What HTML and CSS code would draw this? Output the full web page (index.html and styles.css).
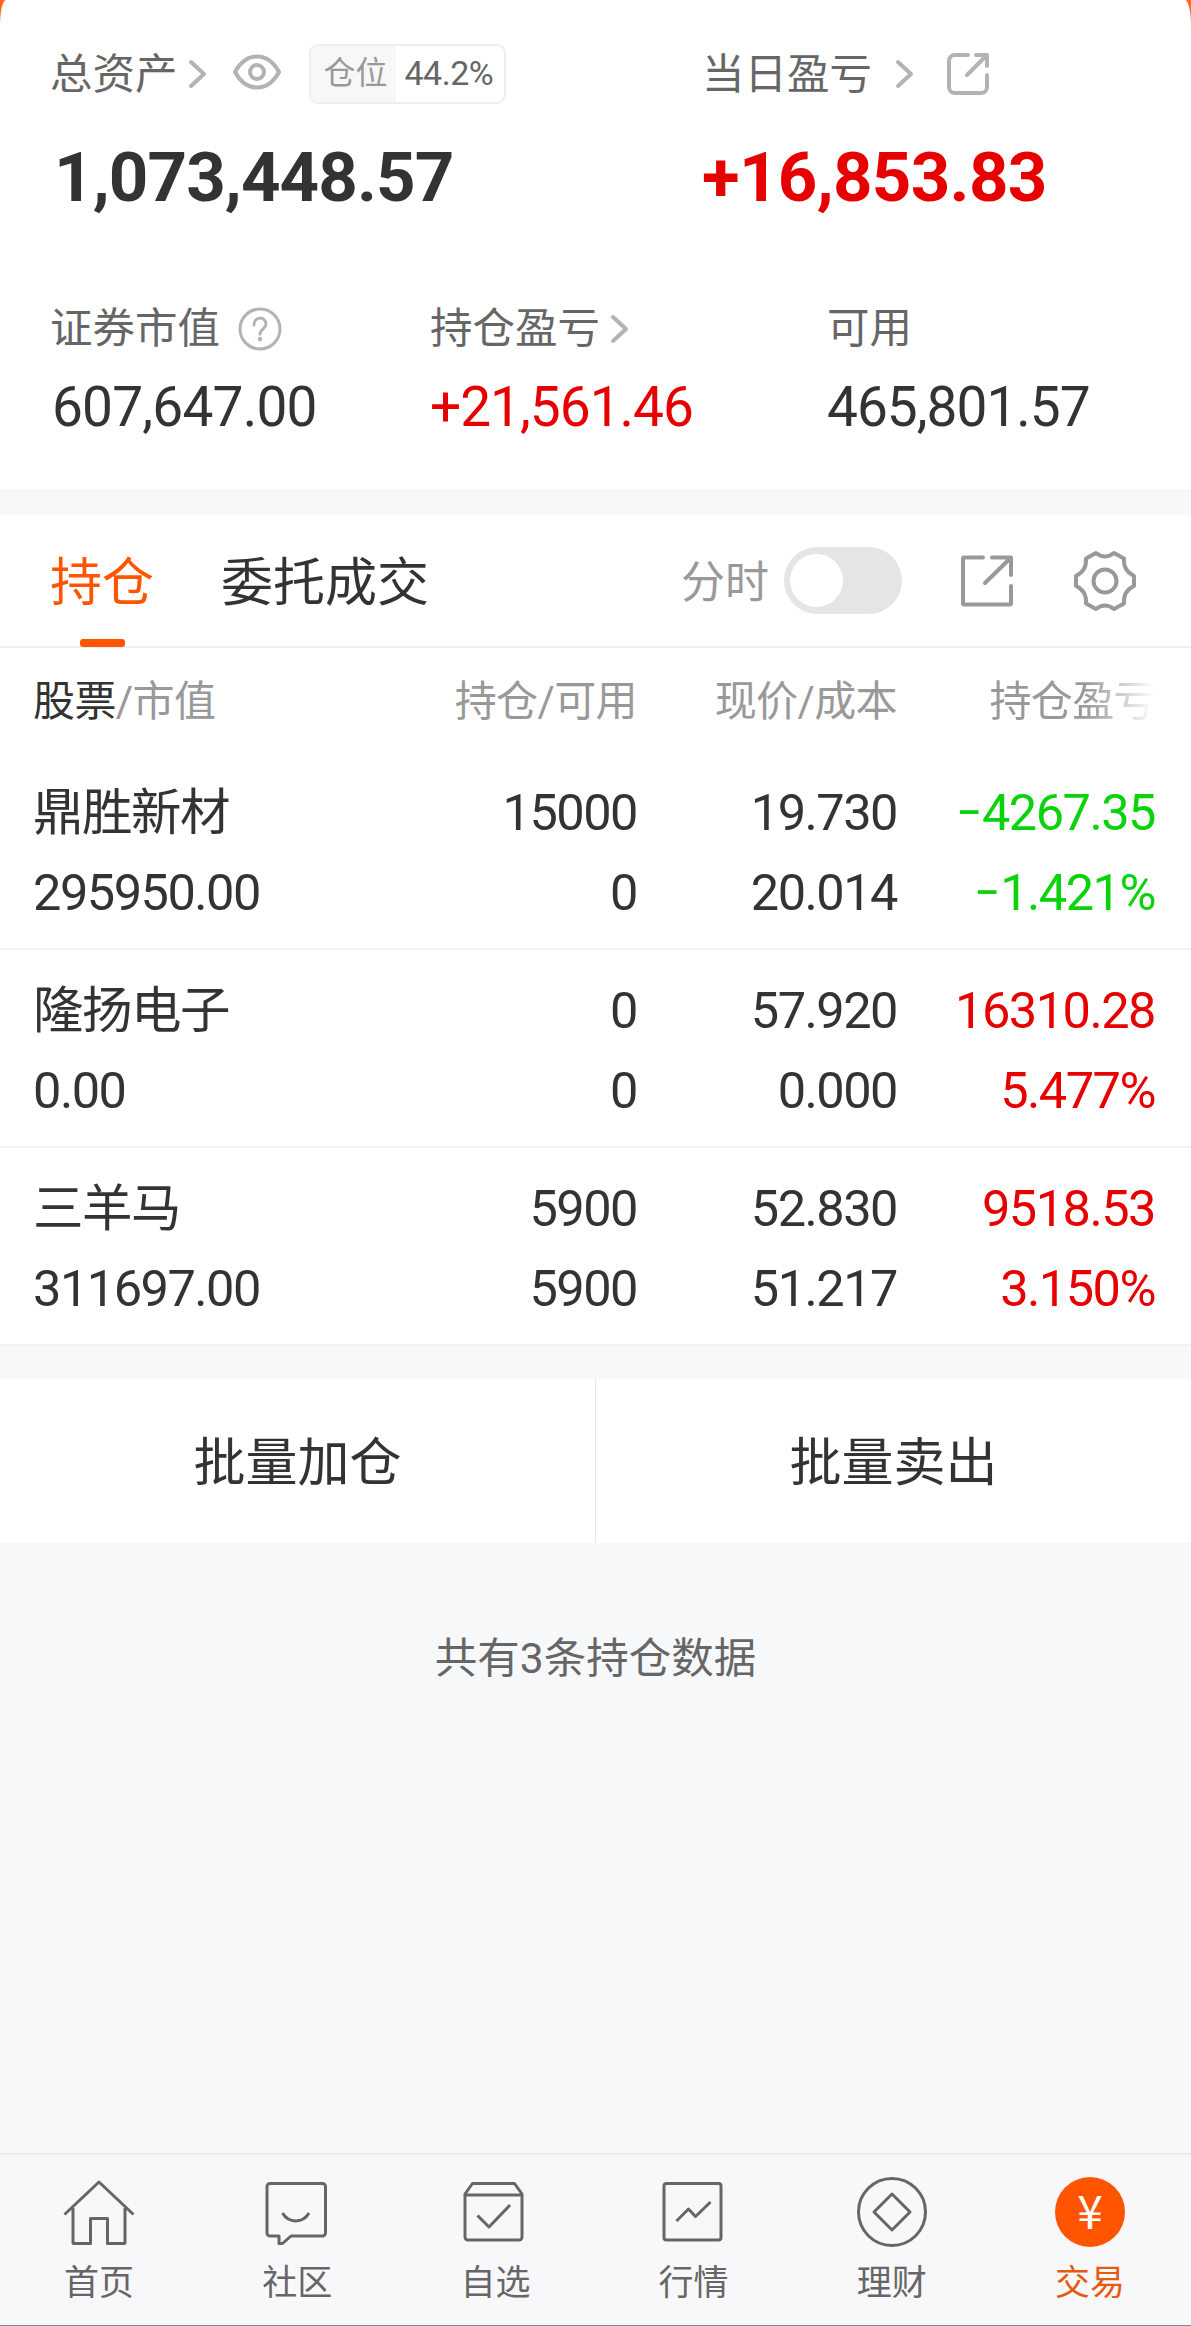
FILE: index.html
```
<!DOCTYPE html>
<html lang="zh-CN">
<head>
  <meta charset="UTF-8" />
  <meta name="viewport" content="width=device-width,initial-scale=1.0" />
  <title>持仓</title>
  <link rel="stylesheet" href="styles.css">
</head>
<body>
  <div class="top">
    <section class="summary">
      <div class="total">
        <div class="label">
          <span class="name">总资产</span>
          <svg class="chevron near" width="20" height="30" viewBox="0 0 20 30"><path d="M3 3l13 12L3 27" /></svg>
          <svg class="eye" width="52" height="40" viewBox="0 0 52 40"><path d="M4 20C10 9 17 4.500 26 4.500S42 9 48 20c-6 11-13 15.500-22 15.500S10 31 4 20z" /><circle cx="26" cy="20" r="7" /></svg>
          <span class="ratio"><span class="ratio-name">仓位</span><span class="ratio-value">44.2%</span></span>
        </div>
        <div class="big">1,073,448.57</div>
      </div>
      <div class="today">
        <div class="label">
          <span class="name">当日盈亏</span>
          <svg class="chevron far" width="20" height="30" viewBox="0 0 20 30"><path d="M3 3l13 12L3 27" /></svg>
          <svg class="share" width="44" height="44" viewBox="0 0 44 44"><path d="M22 3H9a6 6 0 0 0-6 6v26a6 6 0 0 0 6 6h26a6 6 0 0 0 6-6V23M30 3h11v11M40 4L21 23" /></svg>
        </div>
        <div class="big up">+16,853.83</div>
      </div>
    </section>

    <section class="details">
      <div class="detail">
        <div class="label">
          <span class="name">证券市值</span>
          <svg class="help" width="44" height="44" viewBox="0 0 44 44"><circle cx="22" cy="22" r="20" /><path d="M16 18c0-9 12-9 12-1 0 5-6 5-6 10" /><circle class="dot" cx="22" cy="32" r="2.2" /></svg>
        </div>
        <div class="value">607,647.00</div>
      </div>
      <div class="detail">
        <div class="label">
          <span class="name">持仓盈亏</span>
          <svg class="chevron near" width="20" height="30" viewBox="0 0 20 30"><path d="M3 3l13 12L3 27" /></svg>
        </div>
        <div class="value up">+21,561.46</div>
      </div>
      <div class="detail">
        <div class="label"><span class="name">可用</span></div>
        <div class="value">465,801.57</div>
      </div>
    </section>
  </div>

  <div class="tabs">
    <div class="tab active">持仓</div>
    <div class="tab">委托成交</div>
    <div class="tools">
      <span class="minute">分时</span>
      <span class="switch"></span>
      <svg class="export" width="56" height="56" viewBox="0 0 56 56"><path d="M24 4.500H5a1 1 0 0 0-1 1V50.500a1 1 0 0 0 1 1H51a1 1 0 0 0 1-1V33M33 4.500H52V22M51 5.500L26 30" /></svg>
      <svg class="gear" width="64" height="64" viewBox="0 0 64 64"><path d="M23 4q9 7 18 0l10 5.500q-1 12 10 17.500v10q-11 5-10 17.500L41 60q-9-7-18 0l-10-5.500q1-12.500-10-17.500V27q11-5.500 10-17.500z" /><circle cx="32" cy="32" r="11.500" /></svg>
    </div>
  </div>

  <div class="table">
    <div class="row head">
      <div><b>股票</b>/市值</div>
      <div>持仓/可用</div>
      <div>现价/成本</div>
      <div class="fade">持仓盈亏</div>
    </div>
    <div class="row">
      <div>鼎胜新材<br>295950.00</div>
      <div>15000<br>0</div>
      <div>19.730<br>20.014</div>
      <div class="down"><i>−</i>4267.35<br><i>−</i>1.421%</div>
    </div>
    <div class="row">
      <div>隆扬电子<br>0.00</div>
      <div>0<br>0</div>
      <div>57.920<br>0.000</div>
      <div class="up">16310.28<br>5.477%</div>
    </div>
    <div class="row">
      <div>三羊马<br>311697.00</div>
      <div>5900<br>5900</div>
      <div>52.830<br>51.217</div>
      <div class="up">9518.53<br>3.150%</div>
    </div>
  </div>

  <div class="batch">
    <div>批量加仓</div>
    <div>批量卖出</div>
  </div>

  <p class="count">共有3条持仓数据</p>

  <nav class="nav">
    <div class="nav-item">
      <svg width="76" height="76" viewBox="0 0 76 76"><path d="M3.500 40.500L38 8l34.500 32.500M12 34v34.500a1 1 0 0 0 1 1h16.500v-25h17v25H63a1 1 0 0 0 1-1V34" /></svg>
      首页
    </div>
    <div class="nav-item">
      <svg width="76" height="76" viewBox="0 0 76 76"><path d="M11 9.500h52.500a3 3 0 0 1 3 3V59a3 3 0 0 1-3 3H32l-8.500 7.500H20V62h-9a3 3 0 0 1-3-3V12.500a3 3 0 0 1 3-3zM23.500 39c6 10.500 20.500 10.500 26.500 0" /></svg>
      社区
    </div>
    <div class="nav-item">
      <svg width="76" height="76" viewBox="0 0 76 76"><path d="M8 20l7.500-10.500h42L65 20v43a3 3 0 0 1-3 3H11a3 3 0 0 1-3-3zM8 21h57M20.500 41.500L32 53l21-22" /></svg>
      自选
    </div>
    <div class="nav-item">
      <svg width="76" height="76" viewBox="0 0 76 76"><rect x="8" y="9.500" width="57" height="56.500" rx="2.500" /><path d="M20.500 47l12-12 7 7.500 15-14.500" /></svg>
      行情
    </div>
    <div class="nav-item">
      <svg width="76" height="76" viewBox="0 0 76 76"><circle cx="38" cy="38" r="33.500" /><path d="M38 20l18 18-18 18-18-18z" /></svg>
      理财
    </div>
    <div class="nav-item current">
      <svg width="76" height="76" viewBox="0 0 76 76"><circle cx="38" cy="38" r="35" /><text x="38" y="55" text-anchor="middle">¥</text></svg>
      交易
    </div>
  </nav>
</body>
</html>
```
FILE: styles.css
```
* {
  box-sizing: border-box;
}

body {
  margin: 0;
  height: 2326px;
  display: flex;
  flex-direction: column;
  font-family: Roboto, "Noto Sans CJK SC", sans-serif;
  color: #333;
  background: #f7f8fa;
  border-bottom: 1px solid #888;
  overflow: hidden;
}

svg {
  fill: none;
  stroke: #b3b3b3;
  stroke-width: 4;
  stroke-linecap: round;
  stroke-linejoin: round;
  flex-shrink: 0;
}

.up {
  color: #e60000;
}

.down {
  color: #0bd30b;
}

/* account summary */
.top {
  height: 489px;
  flex-shrink: 0;
  background: linear-gradient(#ff6a13 30px, #fff 30px);
}

.summary {
  display: grid;
  grid-template-columns: 652px 1fr;
  height: 299px;
  padding: 44px 0 0 50px;
  background: #fff;
  border-radius: 6px 6px 0 0 / 26px 26px 0 0;
}

.label {
  display: flex;
  align-items: center;
  height: 60px;
  font-size: 42.5px;
  color: #666;
  white-space: nowrap;
}

.name {
  margin-top: -7px;
}

.chevron.near {
  margin-left: 10px;
}

.chevron.far {
  margin-left: 23px;
}

.eye {
  margin-left: 23px;
  margin-top: -4px;
}

.share {
  margin-left: 31px;
}

.ratio {
  display: flex;
  height: 60px;
  width: 197px;
  margin-left: 26px;
  border: 2px solid #eee;
  border-radius: 9px;
  font-size: 32px;
  line-height: 54px;
  overflow: hidden;
}

.ratio-name {
  width: 85px;
  padding-left: 13px;
  background: #f7f7fa;
  color: #999;
}

.ratio-value {
  padding-left: 9px;
  font-size: 34px;
  letter-spacing: -0.5px;
}

.big {
  height: 90px;
  margin-top: 29px;
  line-height: 90px;
  font-size: 69px;
  font-weight: 700;
  letter-spacing: -0.9px;
  padding-left: 4px;
}

.big.up {
  padding-left: 0;
  letter-spacing: -0.7px;
}

.details {
  display: grid;
  grid-template-columns: 380px 397px 1fr;
  padding-left: 50px;
  background: #fff;
}

.detail .name {
  margin-top: -9px;
}

.help {
  margin-left: 18px;
  stroke-width: 3;
}

.help .dot {
  fill: #b3b3b3;
  stroke: none;
}

.value {
  height: 80px;
  margin-top: 8px;
  line-height: 80px;
  font-size: 55px;
  letter-spacing: -1px;
}

.detail:first-child .value {
  padding-left: 2px;
  letter-spacing: -0.8px;
}

/* tabs */
.tabs {
  display: flex;
  flex-shrink: 0;
  height: 133px;
  margin-top: 26px;
  padding-left: 50px;
  gap: 67px;
  line-height: 138px;
  font-size: 52px;
  background: #fff;
  border-bottom: 2px solid #eee;
}

.tab {
  position: relative;
}

.active {
  color: #ff5500;
}

.active::after {
  content: "";
  position: absolute;
  left: 30px;
  bottom: -1px;
  width: 45px;
  height: 8px;
  border-radius: 3px;
  background: #ff5500;
}

.tools {
  display: flex;
  align-items: center;
  margin-left: auto;
  padding-right: 54px;
  font-size: 44px;
  color: #999;
}

.minute {
  padding-top: 4px;
}

.tools svg {
  stroke: #999;
}

.switch {
  width: 118px;
  height: 67px;
  margin-left: 15px;
  padding: 7px 6px;
  border-radius: 34px;
  background: #e5e5e7;
}

.switch::before {
  content: "";
  display: block;
  width: 53px;
  height: 53px;
  border-radius: 50%;
  background: #fff;
}

.export {
  margin-left: 57px;
}

.gear {
  margin-left: 58px;
}

/* holdings */
.table {
  flex-shrink: 0;
  background: #fff;
}

.row {
  display: grid;
  grid-template-columns: 401px 203px 260px 258px;
  height: 198px;
  padding: 21px 0 0 33px;
  border-bottom: 2px solid #f2f3f5;
  font-size: 50.5px;
  line-height: 80px;
  letter-spacing: -1.5px;
  text-align: right;
  white-space: nowrap;
}

.row > div:first-child {
  text-align: left;
}

.row i {
  display: inline-block;
  font-style: normal;
  transform: scaleX(0.9);
}

.row.head {
  height: 104px;
  padding-top: 14px;
  border: none;
  font-size: 42px;
  letter-spacing: -0.6px;
  color: #999;
}

.head b {
  font-weight: 400;
  color: #333;
}

.fade {
  -webkit-mask-image: linear-gradient(to right, #000 73%, transparent);
  mask-image: linear-gradient(to right, #000 73%, transparent);
}

.batch {
  display: flex;
  flex-shrink: 0;
  height: 164px;
  margin-top: 33px;
  background: #fff;
}

.batch div {
  flex: 1;
  font-size: 52px;
  line-height: 170px;
  text-align: center;
}

.batch div + div {
  border-left: 1px solid #e8e8ea;
}

.count {
  margin: 86px 0 0;
  font-size: 42.5px;
  line-height: 60px;
  text-align: center;
  color: #666;
}

/* bottom navigation */
.nav {
  display: grid;
  grid-template-columns: repeat(6, 1fr);
  height: 172px;
  margin-top: auto;
  padding: 19px 2px 0 0;
  background: #f8f8fb;
  border-top: 2px solid #ececec;
}

.nav-item {
  display: flex;
  flex-direction: column;
  align-items: center;
  gap: 9px;
  font-size: 35px;
  line-height: 50px;
  color: #666;
}

.nav-item svg {
  stroke: #666;
  stroke-width: 3;
  stroke-linecap: butt;
}

.current {
  color: #e65a10;
}

.current svg {
  fill: #ff5500;
  stroke: none;
}

.current text {
  font-family: "Noto Sans CJK SC", sans-serif;
  font-size: 46px;
  fill: #fff;
}
```
